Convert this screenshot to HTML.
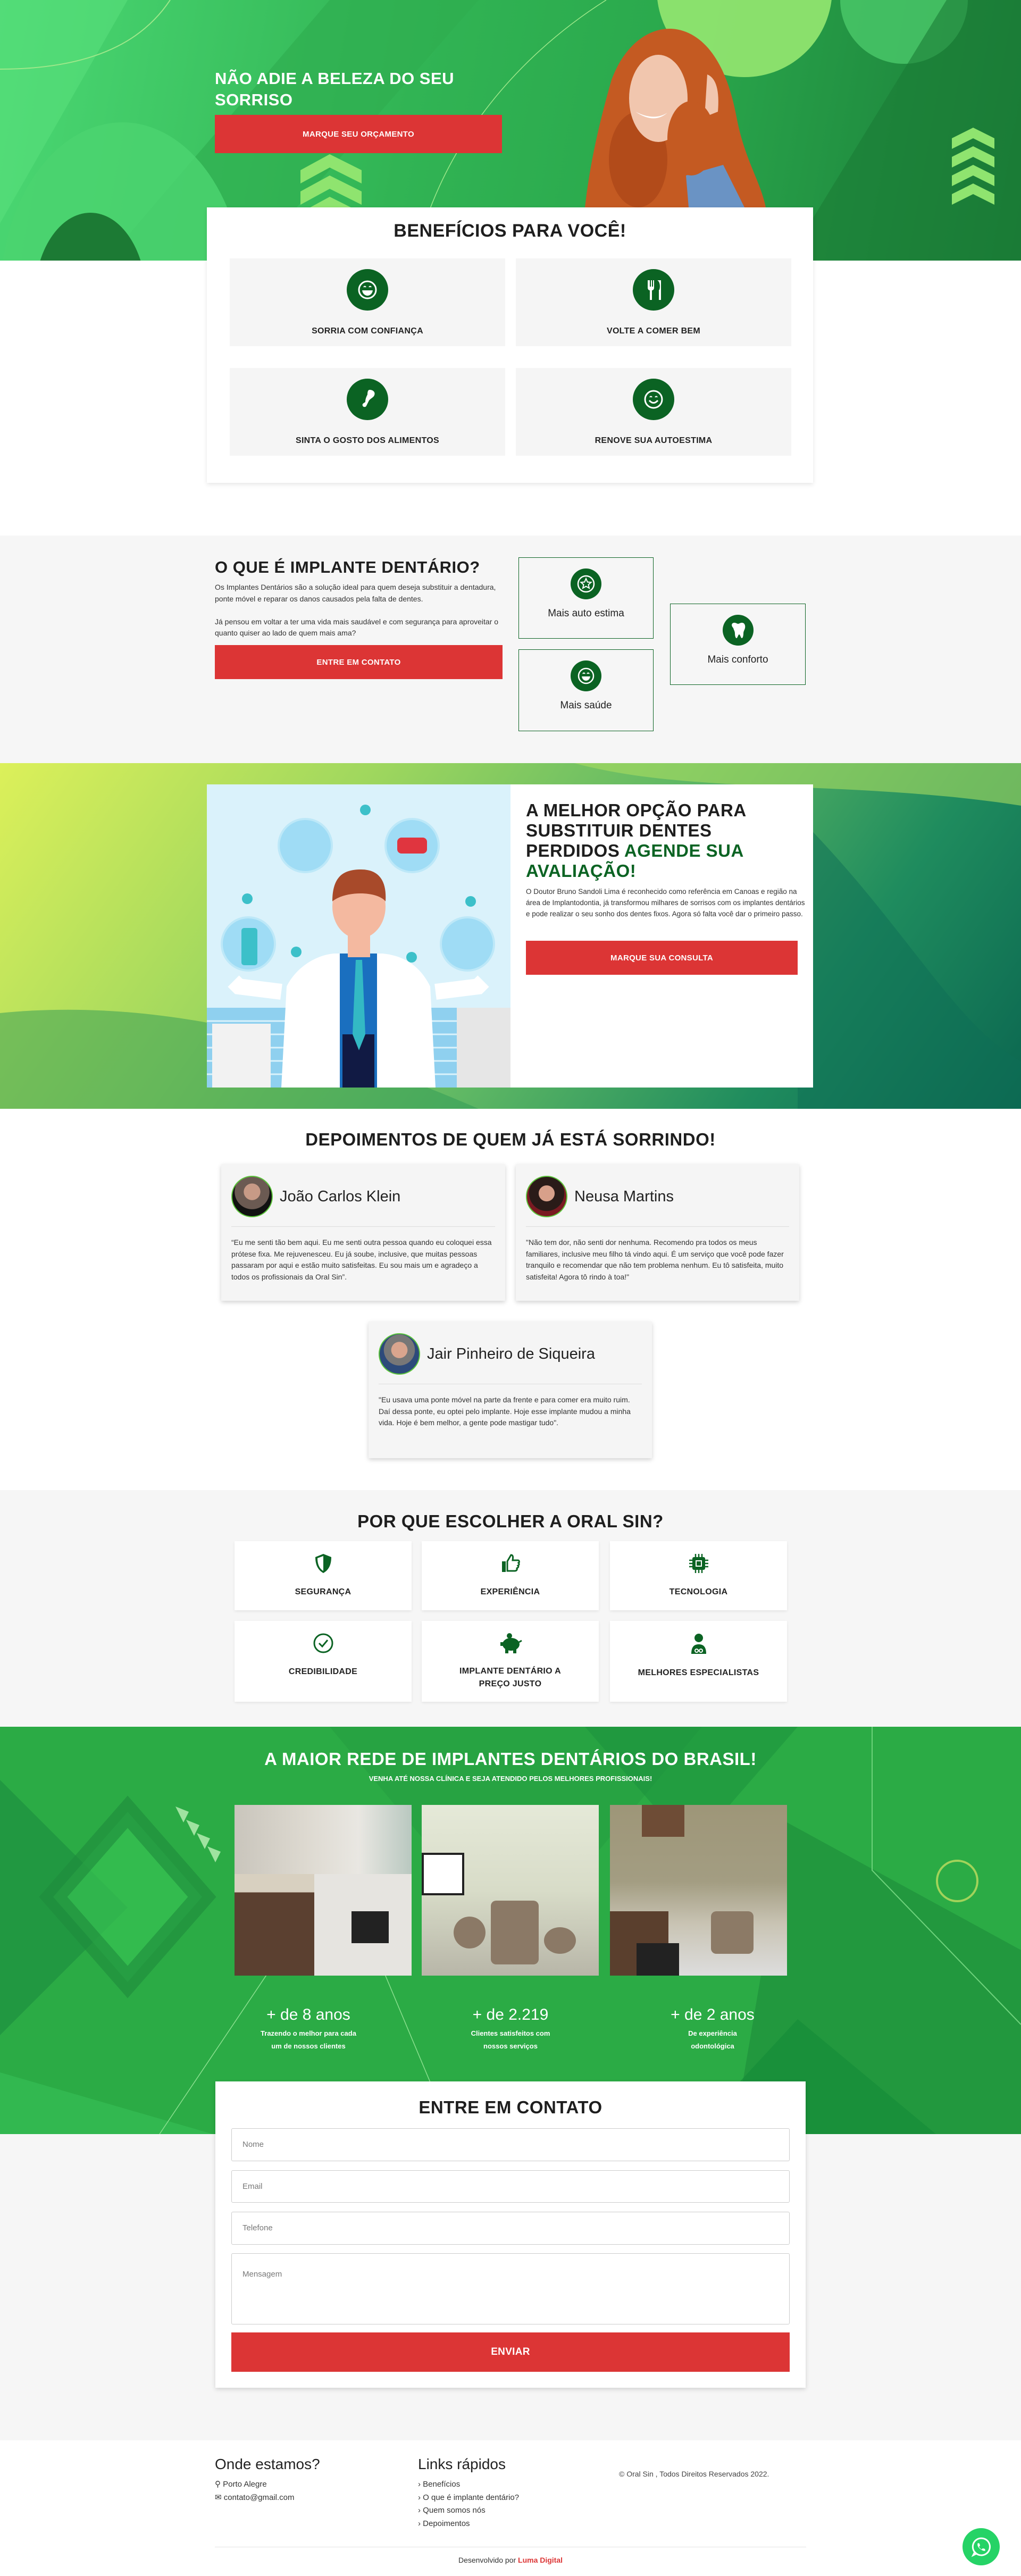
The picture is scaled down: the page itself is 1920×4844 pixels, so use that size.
<!DOCTYPE html>
<html><head><meta charset="utf-8">
<style>
*{margin:0;padding:0;box-sizing:border-box}
body{width:1920px;height:4844px;position:relative;font-family:"Liberation Sans",sans-serif;color:#222;background:#fff;overflow:hidden}
.a{position:absolute}
.h{font-weight:bold;color:#1e1e1e;letter-spacing:0.5px}
.btn{position:absolute;background:#dc3535;color:#fff;font-weight:bold;font-size:15px;display:flex;align-items:center;justify-content:center;letter-spacing:.3px}
.box{position:absolute;background:#f5f5f5;text-align:center}
.ic{width:78px;height:78px;border-radius:50%;background:#0b6323;margin:0 auto;display:flex;align-items:center;justify-content:center}
.lbl{font-weight:bold;font-size:16px;color:#222;letter-spacing:.3px}
.ob{position:absolute;border:1px solid #0b6323;background:transparent;text-align:center}
.ob .ic{width:58px;height:58px}
.tc{position:absolute;background:#f5f5f5;box-shadow:0 3px 8px rgba(0,0,0,.18)}
.av{position:absolute;left:19px;top:22px;width:78px;height:78px;border-radius:50%;border:2px solid #5bc53a;overflow:hidden}
.nm{position:absolute;left:110px;top:45px;font-size:29px;color:#222}
.sep{position:absolute;left:19px;right:19px;top:117px;border-top:1px solid #ddd}
.q{position:absolute;left:19px;right:19px;top:137px;font-size:14px;line-height:21.5px;color:#333}
.wb{position:absolute;background:#fff;box-shadow:0 2px 5px rgba(0,0,0,.08);text-align:center}
.wb svg{margin-top:22px}
.st{position:absolute;width:300px;text-align:center;color:#fff}
.st b{display:block;font-weight:normal;font-size:30px}
.st span{display:block;font-weight:bold;font-size:13px;line-height:24px;margin-top:6px}
.inp{position:absolute;left:30px;width:1050px;border:1px solid #ccc;border-radius:3px;background:#fff;font-size:15px;color:#777;padding-left:20px}
.ft{font-size:15px;color:#333;line-height:24.5px}
</style></head><body>

<!-- HERO -->
<div class="a" style="left:0;top:0;width:1920px;height:490px;overflow:hidden;background:linear-gradient(100deg,#4bd873 0%,#31b454 40%,#2aa84c 65%,#1a7b38 100%)">
<svg class="a" style="left:0;top:0" width="1920" height="490">
<polygon points="0,0 240,0 0,420" fill="#58e07c" opacity=".6"/>
<polygon points="200,490 620,0 900,0 470,490" fill="#2fae50" opacity=".7"/>
<ellipse cx="230" cy="560" rx="230" ry="330" fill="#4bd470" opacity=".85"/>
<ellipse cx="170" cy="560" rx="105" ry="160" fill="#1c7a34"/>
<circle cx="1400" cy="-20" r="165" fill="#8fe46f" opacity=".95"/>
<circle cx="1700" cy="0" r="120" fill="#4bc96a" opacity=".8"/>
<polygon points="1480,490 1780,0 1920,0 1920,490" fill="#1a7b35" opacity=".6"/>
<path d="M0 130 C200 130 280 60 320 0" stroke="#9ee88a" stroke-width="2" fill="none"/>
<path d="M780 490 C820 300 950 120 1140 0" stroke="#9ee88a" stroke-width="1.5" fill="none"/>
<g fill="#8fe46f"><polygon points="565,320 620,290 680,320 680,345 620,315 565,345"/><polygon points="565,360 620,330 680,360 680,385 620,355 565,385"/><polygon points="565,400 620,370 680,400 680,425 620,395 565,425"/></g>
<g fill="#8fe46f"><polygon points="1790,260 1830,240 1870,260 1870,280 1830,260 1790,280"/><polygon points="1790,295 1830,275 1870,295 1870,315 1830,295 1790,315"/><polygon points="1790,330 1830,310 1870,330 1870,350 1830,330 1790,350"/><polygon points="1790,365 1830,345 1870,365 1870,385 1830,365 1790,385"/></g>
<!-- woman -->
<path d="M1100 390 C1110 300 1130 220 1150 150 C1180 70 1240 40 1290 60 C1340 80 1370 140 1385 220 C1400 300 1430 340 1440 390Z" fill="#c45a22"/>
<ellipse cx="1200" cy="300" rx="55" ry="90" fill="#b24b1a"/>
<ellipse cx="1238" cy="185" rx="55" ry="82" fill="#f1c6ae"/>
<path d="M1195 210 q35 18 60 2 q-25 22 -60 -2Z" fill="#fff"/>
<path d="M1330 140 q25 10 20 70 l-25 10Z" fill="#f1c6ae"/>
<path d="M1290 330 L1360 310 L1400 390 L1295 390Z" fill="#6a93c4"/>
<ellipse cx="1300" cy="260" rx="45" ry="70" fill="#c45a22"/>
</svg>
<div class="a h" style="left:404px;top:128px;width:560px;color:#fff;font-size:31px;line-height:40px">NÃO ADIE A BELEZA DO SEU SORRISO</div>
<div class="btn" style="left:404px;top:216px;width:540px;height:72px">MARQUE SEU ORÇAMENTO</div>
</div>

<!-- BENEFITS -->
<div class="a" style="left:389px;top:390px;width:1140px;height:518px;background:#fff;box-shadow:0 3px 8px rgba(0,0,0,.1)">
<div class="a h" style="left:0;top:25px;width:100%;text-align:center;font-size:34px">BENEFÍCIOS PARA VOCÊ!</div>
<div class="box" style="left:43px;top:96px;width:518px;height:165px"><div class="ic" style="margin-top:20px"><svg width="40" height="40" viewBox="0 0 40 40"><circle cx="20" cy="20" r="16" fill="none" stroke="#fff" stroke-width="3"/><path d="M10 21 H30 C29 28 24 31 20 31 C16 31 11 28 10 21Z" fill="#fff"/><path d="M13 15 q2-3 4 0 M23 15 q2-3 4 0" stroke="#fff" stroke-width="2" fill="none"/></svg></div><div class="lbl" style="margin-top:30px">SORRIA COM CONFIANÇA</div></div>
<div class="box" style="left:581px;top:96px;width:518px;height:165px"><div class="ic" style="margin-top:20px"><svg width="40" height="44" viewBox="0 0 40 44"><path d="M9 4v14c0 3 2 5 4 5v18h4V23c2 0 4-2 4-5V4h-2v12h-2V4h-2v12h-2V4z" fill="#fff"/><path d="M27 4c5 2 6 12 4 18h-1v19h4V4z" fill="#fff"/></svg></div><div class="lbl" style="margin-top:30px">VOLTE A COMER BEM</div></div>
<div class="box" style="left:43px;top:302px;width:518px;height:165px"><div class="ic" style="margin-top:20px"><svg width="40" height="44" viewBox="0 0 40 44"><path d="M24 4c8 0 12 6 8 12-3 4-8 5-10 10l-4 8c-1 3-6 3-7 0-1-2 0-4 2-5l3-2c0-6 2-10 4-14 0-5 1-9 4-9z" fill="#fff"/></svg></div><div class="lbl" style="margin-top:30px">SINTA O GOSTO DOS ALIMENTOS</div></div>
<div class="box" style="left:581px;top:302px;width:518px;height:165px"><div class="ic" style="margin-top:20px"><svg width="40" height="40" viewBox="0 0 40 40"><circle cx="20" cy="20" r="16" fill="none" stroke="#fff" stroke-width="3"/><path d="M12 22 q8 9 16 0" stroke="#fff" stroke-width="3" fill="none"/><path d="M13 16 q2-3 4 0 M23 16 q2-3 4 0" stroke="#fff" stroke-width="2" fill="none"/></svg></div><div class="lbl" style="margin-top:30px">RENOVE SUA AUTOESTIMA</div></div>
</div>

<!-- IMPLANTE -->
<div class="a" style="left:0;top:1007px;width:1920px;height:428px;background:#f6f6f6">
<div class="a h" style="left:404px;top:42px;font-size:31px">O QUE É IMPLANTE DENTÁRIO?</div>
<div class="a" style="left:404px;top:87px;width:560px;font-size:14px;line-height:21.5px;color:#333">Os Implantes Dentários são a solução ideal para quem deseja substituir a dentadura, ponte móvel e reparar os danos causados pela falta de dentes.<br><br>Já pensou em voltar a ter uma vida mais saudável e com segurança para aproveitar o quanto quiser ao lado de quem mais ama?</div>
<div class="btn" style="left:404px;top:206px;width:541px;height:64px">ENTRE EM CONTATO</div>
<div class="ob" style="left:975px;top:41px;width:254px;height:153px"><div class="ic" style="margin-top:20px"><svg width="34" height="34" viewBox="0 0 34 34"><circle cx="17" cy="17" r="15" fill="none" stroke="#fff" stroke-width="2.5"/><polygon points="17,7 19.8,13.5 26.5,14 21.5,18.5 23,25 17,21.5 11,25 12.5,18.5 7.5,14 14.2,13.5" fill="none" stroke="#fff" stroke-width="2"/></svg></div><div style="margin-top:16px;font-size:19px">Mais auto estima</div></div>
<div class="ob" style="left:975px;top:214px;width:254px;height:154px"><div class="ic" style="margin-top:20px"><svg width="34" height="34" viewBox="0 0 34 34"><circle cx="17" cy="17" r="14" fill="none" stroke="#fff" stroke-width="2.5"/><path d="M9 18 H25 C24 24 20 26 17 26 C14 26 10 24 9 18Z" fill="#fff"/><path d="M11 13 q2-3 4 0 M19 13 q2-3 4 0" stroke="#fff" stroke-width="2" fill="none"/></svg></div><div style="margin-top:16px;font-size:19px">Mais saúde</div></div>
<div class="ob" style="left:1260px;top:128px;width:255px;height:153px"><div class="ic" style="margin-top:20px"><svg width="30" height="34" viewBox="0 0 30 34"><path d="M8 3c3 0 5 2 7 2s4-2 7-2c5 0 7 5 6 10-1 4-3 6-3 10 0 4-1 9-3 9s-3-7-5-7-3 7-5 7-3-5-3-9c0-4-2-6-3-10C1 8 3 3 8 3z" fill="#fff"/></svg></div><div style="margin-top:16px;font-size:19px">Mais conforto</div></div>
</div>

<!-- MELHOR OPCAO -->
<div class="a" style="left:0;top:1435px;width:1920px;height:650px;overflow:hidden;background:linear-gradient(125deg,#dcf05a 0%,#9fd75e 30%,#5fb864 55%,#1f8c5e 78%,#0b6650 100%)">
<svg class="a" style="left:0;top:0" width="1920" height="650"><path d="M1080 0 C1300 60 1600 30 1920 80 L1920 0Z" fill="#a8dc60" opacity=".6"/><path d="M0 470 C300 440 600 520 900 650 L0 650Z" fill="#2e9a55" opacity=".5"/><path d="M1500 100 C1700 300 1800 500 1920 560 L1920 650 L1500 650Z" fill="#0e6d55" opacity=".5"/></svg>
</div>
<div class="a" style="left:389px;top:1475px;width:1140px;height:570px;background:#fff">
<div class="a" style="left:0;top:0;width:571px;height:570px;background:#daf2fb;overflow:hidden">
<svg width="571" height="570">
<rect x="0" y="420" width="571" height="150" fill="#8fd0ef"/>
<g stroke="#daf2fb" stroke-width="3"><line x1="0" y1="445" x2="571" y2="445"/><line x1="0" y1="470" x2="571" y2="470"/><line x1="0" y1="495" x2="571" y2="495"/><line x1="0" y1="520" x2="571" y2="520"/><line x1="0" y1="545" x2="571" y2="545"/></g>
<rect x="10" y="450" width="110" height="120" fill="#f2f2f2"/>
<rect x="470" y="420" width="101" height="150" fill="#e6e6e6"/>
<circle cx="185" cy="115" r="50" fill="#9fdcf5" stroke="#bde8f8" stroke-width="4"/>
<circle cx="386" cy="115" r="50" fill="#9fdcf5" stroke="#bde8f8" stroke-width="4"/>
<circle cx="78" cy="300" r="50" fill="#9fdcf5" stroke="#bde8f8" stroke-width="4"/>
<circle cx="490" cy="300" r="50" fill="#9fdcf5" stroke="#bde8f8" stroke-width="4"/>
<rect x="358" y="100" width="56" height="30" rx="8" fill="#e0353f"/>
<rect x="65" y="270" width="30" height="70" rx="5" fill="#3cc0c9"/>
<g fill="#3cc0c9"><circle cx="298" cy="48" r="10"/><circle cx="76" cy="215" r="10"/><circle cx="496" cy="220" r="10"/><circle cx="168" cy="315" r="10"/><circle cx="385" cy="325" r="10"/></g>
<path d="M140 570 L150 380 C170 340 210 320 240 318 L330 318 C370 322 400 340 420 380 L430 570Z" fill="#fff"/>
<rect x="250" y="318" width="70" height="252" fill="#1a6fbf"/>
<rect x="255" y="470" width="60" height="100" fill="#111a44"/>
<polygon points="280,330 292,330 298,470 286,500 274,470" fill="#33b9c4"/>
<rect x="265" y="270" width="42" height="55" fill="#f4b9a0"/>
<ellipse cx="286" cy="230" rx="50" ry="60" fill="#f4b9a0"/>
<path d="M236 220 C236 170 260 160 290 160 C330 160 338 190 336 220 C320 200 260 200 236 220Z" fill="#a84a2a"/>
<path d="M140 390 L60 380 L50 370 M430 390 L510 380 L520 370" stroke="#fff" stroke-width="30" fill="none"/>
</svg>
</div>
<div class="a h" style="left:600px;top:30px;width:500px;font-size:33px;line-height:38px">A MELHOR OPÇÃO PARA SUBSTITUIR DENTES PERDIDOS <span style="color:#0b6323">AGENDE SUA AVALIAÇÃO!</span></div>
<div class="a" style="left:600px;top:191px;width:525px;font-size:13.5px;line-height:21px;color:#333">O Doutor Bruno Sandoli Lima é reconhecido como referência em Canoas e região na área de Implantodontia, já transformou milhares de sorrisos com os implantes dentários e pode realizar o seu sonho dos dentes fixos. Agora só falta você dar o primeiro passo.</div>
<div class="btn" style="left:600px;top:294px;width:511px;height:64px">MARQUE SUA CONSULTA</div>
</div>

<!-- DEPOIMENTOS -->
<div class="a h" style="left:0;top:2124px;width:1920px;text-align:center;font-size:33px">DEPOIMENTOS DE QUEM JÁ ESTÁ SORRINDO!</div>
<div class="tc" style="left:416px;top:2189px;width:534px;height:257px"><div class="av" style="background:radial-gradient(circle at 50% 38%,#c79a86 0 26%,#6b5a52 27% 55%,#111 56%)"></div><div class="nm">João Carlos Klein</div><div class="sep"></div><div class="q">“Eu me senti tão bem aqui. Eu me senti outra pessoa quando eu coloquei essa prótese fixa. Me rejuvenesceu. Eu já soube, inclusive, que muitas pessoas passaram por aqui e estão muito satisfeitas. Eu sou mais um e agradeço a todos os profissionais da Oral Sin”.</div></div>
<div class="tc" style="left:970px;top:2189px;width:533px;height:257px"><div class="av" style="background:radial-gradient(circle at 50% 42%,#d8a08a 0 26%,#2a1b18 27% 58%,#7a1a22 59%)"></div><div class="nm">Neusa Martins</div><div class="sep"></div><div class="q">"Não tem dor, não senti dor nenhuma. Recomendo pra todos os meus familiares, inclusive meu filho tá vindo aqui. É um serviço que você pode fazer tranquilo e recomendar que não tem problema nenhum. Eu tô satisfeita, muito satisfeita! Agora tô rindo à toa!"</div></div>
<div class="tc" style="left:693px;top:2485px;width:533px;height:257px"><div class="av" style="background:radial-gradient(circle at 50% 40%,#d9a58e 0 26%,#777 27% 50%,#2d4a7a 51%)"></div><div class="nm">Jair Pinheiro de Siqueira</div><div class="sep"></div><div class="q">"Eu usava uma ponte móvel na parte da frente e para comer era muito ruim. Daí dessa ponte, eu optei pelo implante. Hoje esse implante mudou a minha vida. Hoje é bem melhor, a gente pode mastigar tudo".</div></div>

<!-- POR QUE -->
<div class="a" style="left:0;top:2802px;width:1920px;height:445px;background:#f6f6f6">
<div class="a h" style="left:0;top:40px;width:100%;text-align:center;font-size:33px">POR QUE ESCOLHER A ORAL SIN?</div>
<div class="wb" style="left:441px;top:96px;width:333px;height:130px"><svg width="36" height="40" viewBox="0 0 36 40"><path d="M18 2 L33 8 C33 24 27 33 18 38 C9 33 3 24 3 8Z" fill="#0b6323"/><path d="M18 6 L18 34 C11 30 7 22 7 10Z" fill="#fff"/></svg><div class="lbl" style="margin-top:20px">SEGURANÇA</div></div>
<div class="wb" style="left:793px;top:96px;width:333px;height:130px"><svg width="40" height="40" viewBox="0 0 40 40"><rect x="4" y="16" width="7" height="20" fill="#0b6323"/><path d="M14 16 L21 4 C25 4 25 8 24 14 L34 14 C37 14 37 18 35 19 C37 21 36 23 34 24 C36 26 34 28 32 29 C33 32 31 34 28 34 L14 34Z" fill="none" stroke="#0b6323" stroke-width="3"/></svg><div class="lbl" style="margin-top:20px">EXPERIÊNCIA</div></div>
<div class="wb" style="left:1147px;top:96px;width:333px;height:130px"><svg width="40" height="40" viewBox="0 0 40 40"><rect x="8" y="8" width="24" height="24" rx="3" fill="#0b6323"/><rect x="14" y="14" width="12" height="12" fill="#fff"/><rect x="16" y="16" width="8" height="8" fill="#0b6323"/><g stroke="#0b6323" stroke-width="2.5"><path d="M14 2v6M20 2v6M26 2v6M14 32v6M20 32v6M26 32v6M2 14h6M2 20h6M2 26h6M32 14h6M32 20h6M32 26h6"/></g></svg><div class="lbl" style="margin-top:20px">TECNOLOGIA</div></div>
<div class="wb" style="left:441px;top:246px;width:333px;height:152px"><svg width="40" height="40" viewBox="0 0 40 40"><circle cx="20" cy="20" r="17" fill="none" stroke="#0b6323" stroke-width="3"/><path d="M12 20 l6 6 l10 -12" fill="none" stroke="#0b6323" stroke-width="3"/></svg><div class="lbl" style="margin-top:20px">CREDIBILIDADE</div></div>
<div class="wb" style="left:793px;top:246px;width:333px;height:152px"><svg width="44" height="40" viewBox="0 0 44 40"><ellipse cx="23" cy="22" rx="16" ry="12" fill="#0b6323"/><circle cx="20" cy="6" r="5" fill="#0b6323"/><rect x="12" y="30" width="6" height="9" fill="#0b6323"/><rect x="27" y="30" width="6" height="9" fill="#0b6323"/><rect x="3" y="18" width="6" height="7" fill="#0b6323"/><path d="M38 18 l5 -3" stroke="#0b6323" stroke-width="3"/></svg><div class="lbl" style="margin-top:16px;line-height:24px">IMPLANTE DENTÁRIO A<br>PREÇO JUSTO</div></div>
<div class="wb" style="left:1147px;top:246px;width:333px;height:152px"><svg width="40" height="42" viewBox="0 0 40 42"><circle cx="20" cy="10" r="8" fill="#0b6323"/><path d="M6 40 C6 26 12 22 20 22 C28 22 34 26 34 40Z" fill="#0b6323"/><circle cx="16" cy="34" r="3" fill="none" stroke="#fff" stroke-width="2"/><circle cx="24" cy="34" r="3" fill="none" stroke="#fff" stroke-width="2"/></svg><div class="lbl" style="margin-top:20px">MELHORES ESPECIALISTAS</div></div>
</div>

<!-- MAIOR REDE -->
<div class="a" style="left:0;top:3247px;width:1920px;height:766px;overflow:hidden;background:#2bab45">
<svg class="a" style="left:0;top:0" width="1920" height="766">
<polygon points="0,100 240,340 0,580" fill="#1f9340" opacity=".8"/>
<polygon points="100,320 240,160 380,320 240,480" fill="#38c253" opacity=".7"/>
<polygon points="240,160 380,320 240,480 100,320" fill="none" stroke="#1e8a3c" stroke-width="40" opacity=".6"/>
<polygon points="620,0 1320,0 1120,240 820,240" fill="#26a041" opacity=".7"/>
<polygon points="1480,180 1920,420 1920,766 1380,766" fill="#1d8c3b" opacity=".6"/>
<polygon points="1500,550 1760,766 1300,766" fill="#148a38" opacity=".6"/>
<polygon points="1100,0 1500,0 1300,230" fill="#1a8f3b" opacity=".5"/>
<polygon points="0,650 400,766 0,766" fill="#32b850"/>
<path d="M1640 0 V270 L1920 560" stroke="#6ed37c" stroke-width="2" fill="none"/>
<line x1="300" y1="766" x2="620" y2="290" stroke="#8be08f" stroke-width="1.5"/>
<line x1="650" y1="290" x2="850" y2="766" stroke="#8be08f" stroke-width="1.5"/>
<circle cx="1800" cy="290" r="38" fill="none" stroke="#a2d35a" stroke-width="4"/>
<g fill="#9fe3a0"><polygon points="330,150 345,180 355,160"/><polygon points="350,175 365,205 375,185"/><polygon points="370,200 385,230 395,210"/><polygon points="390,225 405,255 415,235"/></g>
</svg>
<div class="a h" style="left:0;top:42px;width:100%;text-align:center;font-size:33px;color:#fff">A MAIOR REDE DE IMPLANTES DENTÁRIOS DO BRASIL!</div>
<div class="a" style="left:0;top:90px;width:100%;text-align:center;font-size:13px;color:#fff;font-weight:bold">VENHA ATÉ NOSSA CLÍNICA E SEJA ATENDIDO PELOS MELHORES PROFISSIONAIS!</div>
<div class="a" style="left:441px;top:147px;width:333px;height:321px;background:linear-gradient(90deg,#c9c5bc 0%,#ddd9d0 40%,#e9e7e2 70%,#b9c8c0 100%)"><div class="a" style="left:0;top:130px;width:100%;height:191px;background:linear-gradient(180deg,#d8d0c0 0 18%,#5b4030 18% 100%)"></div><div class="a" style="left:150px;top:130px;width:183px;height:191px;background:#e6e4e0"></div><div class="a" style="left:220px;top:200px;width:70px;height:60px;background:#222"></div></div>
<div class="a" style="left:793px;top:147px;width:333px;height:321px;background:linear-gradient(180deg,#e5e9d8 0%,#d8dcc8 50%,#b8b6a8 100%)"><div class="a" style="left:0;top:90px;width:80px;height:80px;background:#fff;border:4px solid #222"></div><div class="a" style="left:130px;top:180px;width:90px;height:120px;background:#8b7966;border-radius:10px"></div><div class="a" style="left:60px;top:210px;width:60px;height:60px;background:#8b7966;border-radius:50%"></div><div class="a" style="left:230px;top:230px;width:60px;height:50px;background:#8b7966;border-radius:50%"></div></div>
<div class="a" style="left:1147px;top:147px;width:333px;height:321px;background:linear-gradient(180deg,#9e9678 0%,#a39d82 45%,#c9c4b4 70%,#ddd 100%)"><div class="a" style="left:60px;top:0;width:80px;height:60px;background:#6e4c36"></div><div class="a" style="left:0;top:200px;width:110px;height:121px;background:#5a3f2d"></div><div class="a" style="left:50px;top:260px;width:80px;height:61px;background:#222"></div><div class="a" style="left:190px;top:200px;width:80px;height:80px;background:#8c7a66;border-radius:10px"></div></div>
<div class="st" style="left:430px;top:525px"><b>+ de 8 anos</b><span>Trazendo o melhor para cada<br>um de nossos clientes</span></div>
<div class="st" style="left:810px;top:525px"><b>+ de 2.219</b><span>Clientes satisfeitos com<br>nossos serviços</span></div>
<div class="st" style="left:1190px;top:525px"><b>+ de 2 anos</b><span>De experiência<br>odontológica</span></div>
</div>

<!-- CONTACT -->
<div class="a" style="left:0;top:4013px;width:1920px;height:576px;background:#f6f6f6"></div>
<div class="a" style="left:405px;top:3914px;width:1110px;height:576px;background:#fff;box-shadow:0 3px 8px rgba(0,0,0,.15)">
<div class="a h" style="left:0;top:30px;width:100%;text-align:center;font-size:33px">ENTRE EM CONTATO</div>
<div class="inp" style="top:88px;height:62px;line-height:60px">Nome</div>
<div class="inp" style="top:167px;height:61px;line-height:59px">Email</div>
<div class="inp" style="top:245px;height:62px;line-height:60px">Telefone</div>
<div class="inp" style="top:323px;height:134px;padding-top:30px">Mensagem</div>
<div class="btn" style="left:30px;top:472px;width:1050px;height:74px;font-size:19px">ENVIAR</div>
</div>

<!-- FOOTER -->
<div class="a" style="left:404px;top:4618px;font-size:28px;color:#222">Onde estamos?</div>
<div class="a ft" style="left:404px;top:4660px">⚲ Porto Alegre<br>✉ contato@gmail.com</div>
<div class="a" style="left:786px;top:4618px;font-size:28px;color:#222">Links rápidos</div>
<div class="a ft" style="left:786px;top:4660px">› Benefícios<br>› O que é implante dentário?<br>› Quem somos nós<br>› Depoimentos</div>
<div class="a" style="left:1164px;top:4644px;font-size:14px;color:#444">© Oral Sin , Todos Direitos Reservados 2022.</div>
<div class="a" style="left:404px;top:4789px;width:1112px;border-top:1px solid #e2e2e2"></div>
<div class="a" style="left:0;top:4806px;width:1920px;text-align:center;font-size:14px;color:#333">Desenvolvido por <b style="color:#dc3535">Luma Digital</b></div>
<div class="a" style="left:1810px;top:4754px;width:70px;height:70px;border-radius:50%;background:#25d366;display:flex;align-items:center;justify-content:center"><svg width="40" height="40" viewBox="0 0 40 40"><path d="M20 4 A16 16 0 1 1 8 30 L5 36 L11 33 A16 16 0 0 1 20 4Z" fill="none" stroke="#fff" stroke-width="3"/><path d="M14 13 c-2 3 0 8 4 11 s8 5 10 3 l-1-3 -4-1 -2 2 c-2-1-4-3-5-5 l2-2 -1-4z" fill="#fff"/></svg></div>
</body></html>
